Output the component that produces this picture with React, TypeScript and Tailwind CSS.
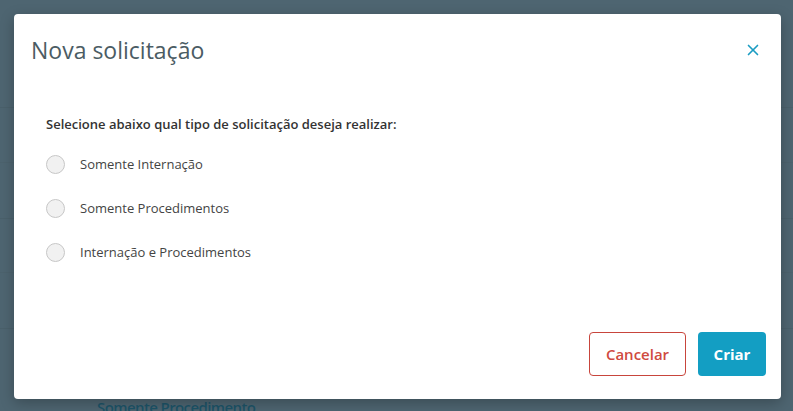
import { X } from "lucide-react";

const options = ["Somente Internação", "Somente Procedimentos", "Internação e Procedimentos"];

export default function App() {
  return (
    <div
      className="relative w-[793px] h-[411px] overflow-hidden bg-[#4e6571]"
      style={{ fontFamily: "'Open Sans', Lato, sans-serif" }}
    >
      {/* page behind the overlay */}
      <div className="flex flex-col">
        <div className="h-[108px] border-b border-[#4a606b]" />
        <div className="h-[55px] border-b border-[#4c626d]" />
        <div className="h-[56px] border-b border-[#4a606b]" />
        <div className="h-[54px] border-b border-[#4c626d]" />
        <div className="h-[56px] border-b border-[#4a606b]" />
        <div className="pl-[97px] pt-[71px] text-[15px] font-semibold leading-none tracking-[-0.6px] text-[#1d5468]">
          Somente Procedimento
        </div>
      </div>

      {/* modal */}
      <div className="absolute left-[14px] top-[14px] w-[767px] h-[385px] bg-white rounded-[4px] flex flex-col shadow-[0_4px_14px_rgba(0,0,0,0.25)]">
        <div className="h-[72px] flex items-center justify-between pl-[17px] pr-[19px]">
          <h2 className="text-[23px] text-[#4b5c64]">Nova solicitação</h2>
          <X size={18} strokeWidth={2.2} className="text-[#1b9cc2]" />
        </div>

        <div className="flex-1 pl-[32px] pt-[32px]">
          <p className="text-[13px] font-semibold text-[#333] leading-none">
            Selecione abaixo qual tipo de solicitação deseja realizar:
          </p>
          <div className="mt-[24px] flex flex-col gap-[25px]">
            {options.map((o) => (
              <label key={o} className="flex items-center gap-[15px] h-[19px]">
                <span className="w-[19px] h-[19px] rounded-full border border-[#c7c7c7] bg-[#f1f1f1]" />
                <span className="text-[13px] text-[#444]">{o}</span>
              </label>
            ))}
          </div>
        </div>

        <div className="flex justify-end gap-[12px] pr-[15px] pb-[23px]">
          <button className="w-[97px] h-[44px] rounded-[4px] border border-[#c8453c] bg-white text-[15px] font-semibold text-[#cf4a40]">
            Cancelar
          </button>
          <button className="w-[68px] h-[44px] rounded-[4px] bg-[#139ec3] text-[15px] font-bold text-white">
            Criar
          </button>
        </div>
      </div>
    </div>
  );
}
